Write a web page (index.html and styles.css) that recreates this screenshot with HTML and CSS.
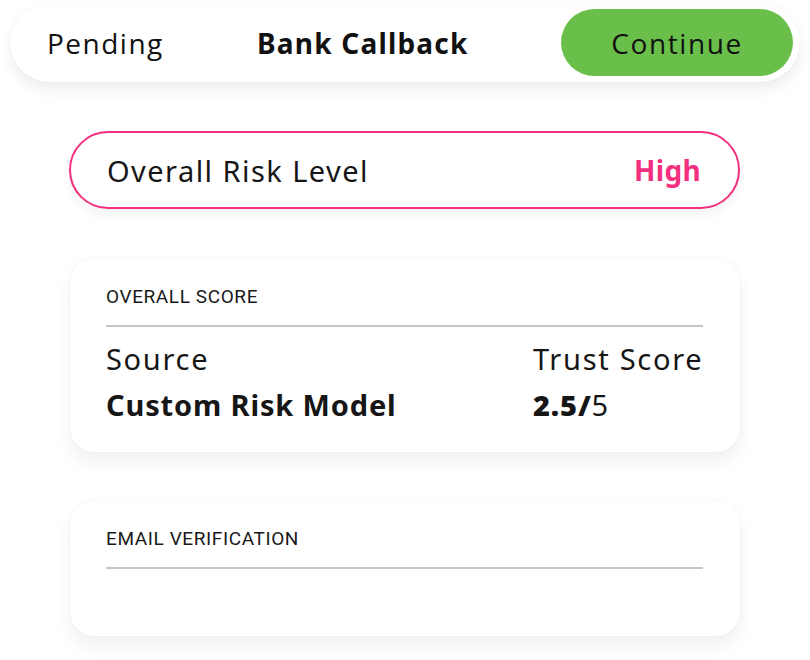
FILE: index.html
```html
<!DOCTYPE html>
<html>
<head>
<meta charset="utf-8">
<link rel="stylesheet" href="styles.css">
</head>
<body>
<div class="page">
  <div class="topbar">
    <span class="tab tab-pending">Pending</span>
    <span class="tab tab-current">Bank Callback</span>
    <button class="btn-continue">Continue</button>
  </div>
  <div class="content">
    <div class="risk">
      <span class="risk-label">Overall Risk Level</span>
      <span class="risk-value">High</span>
    </div>
    <div class="card card-score">
      <div class="card-title">OVERALL SCORE</div>
      <div class="divider"></div>
      <div class="score-grid">
        <div class="col-label">Source</div>
        <div class="col-label">Trust Score</div>
        <div class="col-value">Custom Risk Model</div>
        <div class="col-value"><b>2.5/</b><span class="light">5</span></div>
      </div>
    </div>
    <div class="card card-email">
      <div class="card-title">EMAIL VERIFICATION</div>
      <div class="divider"></div>
    </div>
  </div>
</div>
</body>
</html>
```
FILE: styles.css
```css
* { box-sizing: border-box; }
html, body { margin: 0; padding: 0; background: #ffffff; }
body {
  font-family: "Open Sans", "Noto Sans", sans-serif;
  color: #161616;
  width: 810px;
  height: 660px;
  overflow: hidden;
}
.page { padding-top: 3px; }
.topbar {
  margin: 0 10px;
  height: 79px;
  border-radius: 40px;
  background: #fff;
  box-shadow: 0 8px 14px rgba(0,0,0,0.07), 0 0 2px rgba(0,0,0,0.06);
  display: flex;
  align-items: center;
  padding: 0 7px 0 37px;
}
.tab { font-size: 28px; color: #111; }
.tab-pending { width: 210px; letter-spacing: 1.5px; }
.tab-current {
  font-weight: 700;
  font-family: "Noto Sans", sans-serif;
  font-size: 28px;
  letter-spacing: 1.2px;
}
.btn-continue {
  margin-left: auto;
  width: 232px;
  height: 67px;
  border: none;
  border-radius: 34px;
  background: #6abf4b;
  color: #111;
  font-family: "Open Sans", sans-serif;
  font-size: 28px;
  letter-spacing: 1.6px;
  padding: 0;
}
.content {
  margin-left: 69px;
  width: 671px;
  padding-top: 49px;
}
.risk {
  height: 78px;
  border: 2px solid #f2307f;
  border-radius: 39px;
  display: flex;
  align-items: center;
  justify-content: space-between;
  padding: 0 37px 0 36px;
  box-shadow: 0 6px 12px rgba(0,0,0,0.05);
}
.risk-label { font-size: 29px; font-family: "Noto Sans", sans-serif; letter-spacing: 1.45px; }
.risk-value { font-size: 28px; font-weight: 700; color: #f2307f; font-family: "Noto Sans", sans-serif; letter-spacing: 0.3px; }
.card {
  margin-left: 1px;
  width: 670px;
  background: #fff;
  border-radius: 24px;
  box-shadow: 0 10px 18px rgba(0,0,0,0.06), 0 0 2px rgba(0,0,0,0.07);
  padding: 27px 37px 0 36px;
}
.card-score { margin-top: 49px; height: 194px; }
.card-email { margin-top: 48px; height: 136px; }
.card-title {
  font-family: "Roboto", sans-serif;
  font-size: 19px;
  line-height: 24px;
  color: #1a1a1a;
  letter-spacing: 0.6px;
}
.divider {
  margin-top: 16px;
  height: 2px;
  background: #c6c6c6;
}
.score-grid {
  display: grid;
  grid-template-columns: 1fr 170px;
  row-gap: 10px;
  margin-top: 15px;
  font-family: "Noto Sans", sans-serif;
}
.col-label { font-size: 29px; line-height: 34px; letter-spacing: 1.7px; white-space: nowrap; }
.col-value { font-size: 29px; line-height: 38px; font-weight: 700; letter-spacing: 0.85px; white-space: nowrap; }
.light { font-weight: 400; }
```
